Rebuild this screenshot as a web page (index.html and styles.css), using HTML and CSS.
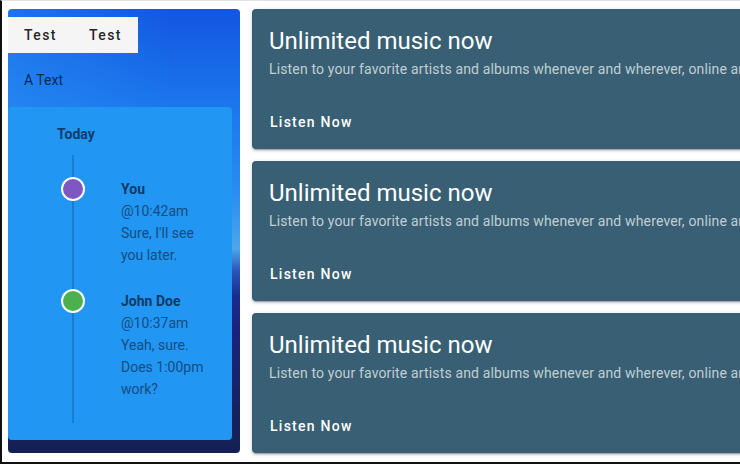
FILE: index.html
```html
<!DOCTYPE html>
<html>
<head>
<meta charset="utf-8">
<link rel="stylesheet" href="styles.css">
</head>
<body>
<div class="frame">
  <aside class="panel">
    <div class="tabs">
      <div class="tab">Test</div>
      <div class="tab">Test</div>
    </div>
    <div class="atext">A Text</div>
    <div class="tl-card">
      <div class="today">Today</div>
      <div class="timeline">
        <div class="item">
          <span class="dot purple"></span>
          <div class="body">
            <div class="name">You</div>
            <div>@10:42am</div>
            <div>Sure, I'll see<br>you later.</div>
          </div>
        </div>
        <div class="item">
          <span class="dot green"></span>
          <div class="body">
            <div class="name">John Doe</div>
            <div>@10:37am</div>
            <div>Yeah, sure.<br>Does 1:00pm<br>work?</div>
          </div>
        </div>
      </div>
    </div>
  </aside>
  <main class="cards">
    <section class="card">
      <h2 class="title">Unlimited music now</h2>
      <p class="sub">Listen to your favorite artists and albums whenever and wherever, online and offline.</p>
      <div class="actions"><button class="btn">Listen Now</button></div>
    </section>
    <section class="card">
      <h2 class="title">Unlimited music now</h2>
      <p class="sub">Listen to your favorite artists and albums whenever and wherever, online and offline.</p>
      <div class="actions"><button class="btn">Listen Now</button></div>
    </section>
    <section class="card">
      <h2 class="title">Unlimited music now</h2>
      <p class="sub">Listen to your favorite artists and albums whenever and wherever, online and offline.</p>
      <div class="actions"><button class="btn">Listen Now</button></div>
    </section>
  </main>
</div>
</body>
</html>
```
FILE: styles.css
```css
* { box-sizing: border-box; }
html, body {
  margin: 0;
  background: #fff;
  overflow: hidden;
  font-family: Roboto, "Liberation Sans", sans-serif;
}
.frame {
  width: 740px;
  border-top: 1px solid #e2e2e2;
  border-left: 2px solid #111;
  border-bottom: 2px solid #111;
  padding: 8px 0 9px 6px;
  display: flex;
  gap: 12px;
  overflow: hidden;
}
.panel {
  flex: 0 0 232px;
  height: 444px;
  border-radius: 4px;
  padding-top: 8px;
  background:
    linear-gradient(to right, rgba(45,150,245,0.45) 0%, rgba(45,150,245,0) 70%) top / 100% 45% no-repeat,
    linear-gradient(to bottom, #1356e0 0%, #1a74ec 20%, #2b8ef0 42%, #4ea6ea 54%, #2a55b8 59%, #1a2a8c 65%, #1a237e 72%, #16225f 90%, #142054 100%);
}
.tabs {
  display: flex;
  width: 130px;
  height: 36px;
  background: #f5f5f5;
}
.tab {
  flex: 1;
  display: flex;
  align-items: center;
  justify-content: center;
  font-size: 14px;
  font-weight: 500;
  letter-spacing: 1.4px;
  color: rgba(0,0,0,0.87);
}
.atext {
  margin-top: 17px;
  padding-left: 16px;
  font-size: 14px;
  line-height: 20px;
  color: #0b2a50;
}
.tl-card {
  margin-top: 17px;
  width: 224px;
  height: 333px;
  background: #2196f3;
  border-radius: 4px;
  padding-top: 17px;
}
.today {
  padding-left: 49px;
  font-size: 14px;
  font-weight: 700;
  line-height: 20px;
  color: #0e3d6e;
}
.timeline {
  position: relative;
  margin-top: 11px;
  height: 268px;
  padding-top: 23px;
}
.timeline::before {
  content: "";
  position: absolute;
  left: 64px;
  top: 0;
  bottom: 0;
  width: 2px;
  background: rgba(0,0,0,0.16);
}
.item {
  display: flex;
  align-items: flex-start;
  margin-bottom: 24px;
}
.dot {
  position: relative;
  flex: 0 0 24px;
  height: 24px;
  margin-top: -1px;
  margin-left: 53px;
  border-radius: 50%;
  border: 2.5px solid #fff;
}
.purple { background: #7e57c2; }
.green { background: #4caf50; }
.body {
  margin-left: 36px;
  font-size: 14px;
  line-height: 22px;
  color: #174c80;
}
.name {
  font-weight: 700;
  color: #0f3a66;
}
.cards {
  flex: 0 0 560px;
  display: flex;
  flex-direction: column;
  gap: 12px;
}
.card {
  height: 140px;
  background: #385f73;
  border-radius: 4px;
  box-shadow: 0 3px 1px -2px rgba(0,0,0,.2), 0 2px 2px 0 rgba(0,0,0,.14), 0 1px 5px 0 rgba(0,0,0,.12);
  padding-top: 16px;
  color: #fff;
}
.title {
  margin: 0;
  padding-left: 17px;
  font-size: 24px;
  font-weight: 400;
  line-height: 32px;
}
.sub {
  margin: 2px 0 0;
  padding-left: 17px;
  font-size: 14px;
  line-height: 20px;
  letter-spacing: 0.15px;
  color: rgba(255,255,255,0.7);
  white-space: nowrap;
}
.actions {
  margin-top: 25px;
  padding-left: 8px;
}
.btn {
  height: 36px;
  padding: 0 10px;
  border: 0;
  background: transparent;
  color: #fff;
  font-family: Roboto, "Liberation Sans", sans-serif;
  font-size: 14px;
  font-weight: 500;
  letter-spacing: 1.25px;
}
```
